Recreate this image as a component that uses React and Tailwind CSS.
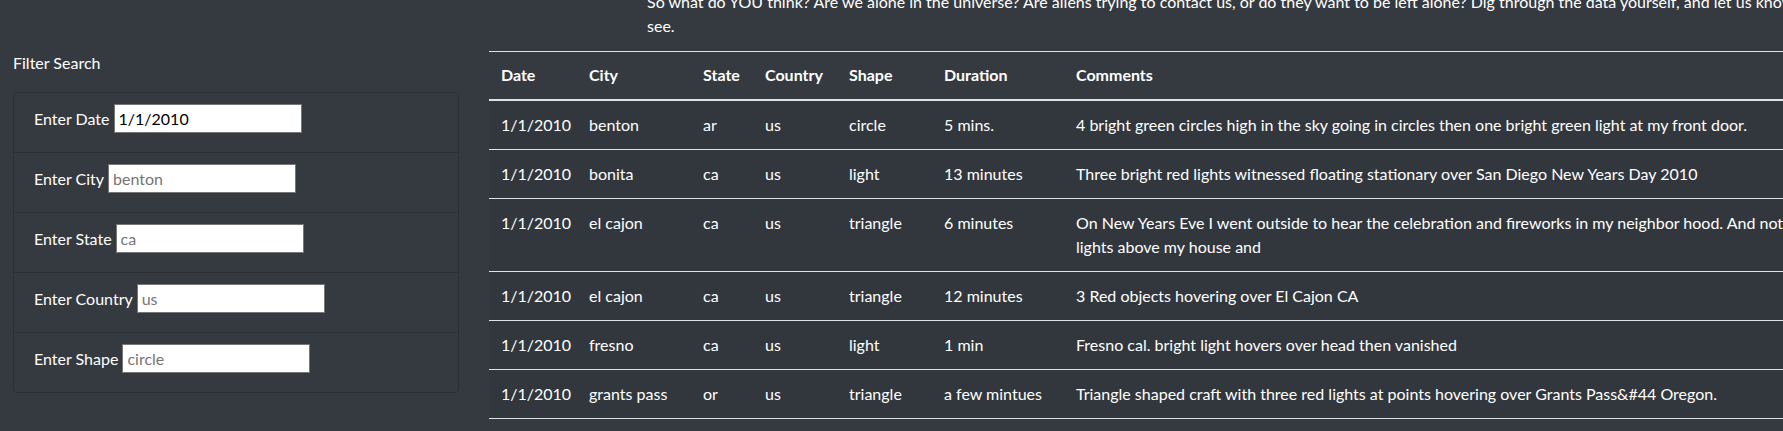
import { useState } from "react";

const rows = [
  { date: "1/1/2010", city: "benton", state: "ar", country: "us", shape: "circle", duration: "5 mins.", comments: ["4 bright green circles high in the sky going in circles then one bright green light at my front door."] },
  { date: "1/1/2010", city: "bonita", state: "ca", country: "us", shape: "light", duration: "13 minutes", comments: ["Three bright red lights witnessed floating stationary over San Diego New Years Day 2010"] },
  { date: "1/1/2010", city: "el cajon", state: "ca", country: "us", shape: "triangle", duration: "6 minutes", comments: ["On New Years Eve I went outside to hear the celebration and fireworks in my neighbor hood. And noticed", "lights above my house and"] },
  { date: "1/1/2010", city: "el cajon", state: "ca", country: "us", shape: "triangle", duration: "12 minutes", comments: ["3 Red objects hovering over El Cajon CA"] },
  { date: "1/1/2010", city: "fresno", state: "ca", country: "us", shape: "light", duration: "1 min", comments: ["Fresno cal. bright light hovers over head then vanished"] },
  { date: "1/1/2010", city: "grants pass", state: "or", country: "us", shape: "triangle", duration: "a few mintues", comments: ["Triangle shaped craft with three red lights at points hovering over Grants Pass&#44 Oregon."] },
];

const filters = [
  { label: "Enter Date", id: "datetime", placeholder: "1/1/2011", value: "1/1/2010" },
  { label: "Enter City", id: "city", placeholder: "benton" },
  { label: "Enter State", id: "state", placeholder: "ca" },
  { label: "Enter Country", id: "country", placeholder: "us" },
  { label: "Enter Shape", id: "shape", placeholder: "circle" },
];

export default function App() {
  const [date, setDate] = useState("1/1/2010");

  return (
    <div className="h-[431px] w-[1783px] overflow-hidden bg-[#353a41] text-white text-[16px] leading-6 font-['Lato','Liberation_Sans',sans-serif]">
      <div className="flex">
        {/* Filters */}
        <aside className="w-[489px] shrink-0 pl-[13px] pt-[51px]">
          <h5 className="leading-6">Filter Search</h5>
          <ul className="mt-[17px] w-[446px] rounded border border-[#2c3035]">
            {filters.map((f, i) => (
              <li
                key={f.id}
                className={
                  "pl-[20px] pt-[11px] flex items-start " +
                  (i > 0 ? "border-t border-[#2c3035] h-[60px]" : "h-[59px]")
                }
              >
                <label htmlFor={f.id} className="leading-[29px] mr-[4px]">
                  {f.label}
                </label>
                <input
                  id={f.id}
                  type="text"
                  placeholder={f.placeholder}
                  value={f.value ? date : undefined}
                  onChange={f.value ? (e) => setDate(e.target.value) : undefined}
                  className="h-[29px] w-[188px] bg-white border border-[#767676] px-[4px] text-black placeholder:text-[#757575] outline-none"
                />
              </li>
            ))}
          </ul>
        </aside>

        {/* Data */}
        <main className="flex-1 min-w-0">
          <p className="-mt-[10px] ml-[158px] mb-[13px] whitespace-nowrap">
            So what do YOU think? Are we alone in the universe? Are aliens trying to contact us, or do they want to be left alone? Dig through the data yourself, and let us know what you
            <br />
            see.
          </p>
          <table className="table-fixed w-[1600px] text-left border-t border-[#dee2e6]">
            <colgroup>
              <col className="w-[88px]" />
              <col className="w-[114px]" />
              <col className="w-[62px]" />
              <col className="w-[84px]" />
              <col className="w-[95px]" />
              <col className="w-[132px]" />
              <col />
            </colgroup>
            <thead>
              <tr className="border-b-2 border-[#dee2e6]">
                {["Date", "City", "State", "Country", "Shape", "Duration", "Comments"].map((h) => (
                  <th key={h} className="h-[48px] px-3 font-bold align-middle whitespace-nowrap">
                    {h}
                  </th>
                ))}
              </tr>
            </thead>
            <tbody className="bg-[#32373e]">
              {rows.map((r, i) => (
                <tr key={i} className="border-b border-[#dee2e6]">
                  <td className="px-3 py-3 align-top whitespace-nowrap">{r.date}</td>
                  <td className="px-3 py-3 align-top whitespace-nowrap">{r.city}</td>
                  <td className="px-3 py-3 align-top">{r.state}</td>
                  <td className="px-3 py-3 align-top">{r.country}</td>
                  <td className="px-3 py-3 align-top">{r.shape}</td>
                  <td className="px-3 py-3 align-top whitespace-nowrap">{r.duration}</td>
                  <td className="px-3 py-3 align-top whitespace-nowrap">
                    {r.comments.map((c, j) => (
                      <div key={j}>{c}</div>
                    ))}
                  </td>
                </tr>
              ))}
            </tbody>
          </table>
        </main>
      </div>
    </div>
  );
}
